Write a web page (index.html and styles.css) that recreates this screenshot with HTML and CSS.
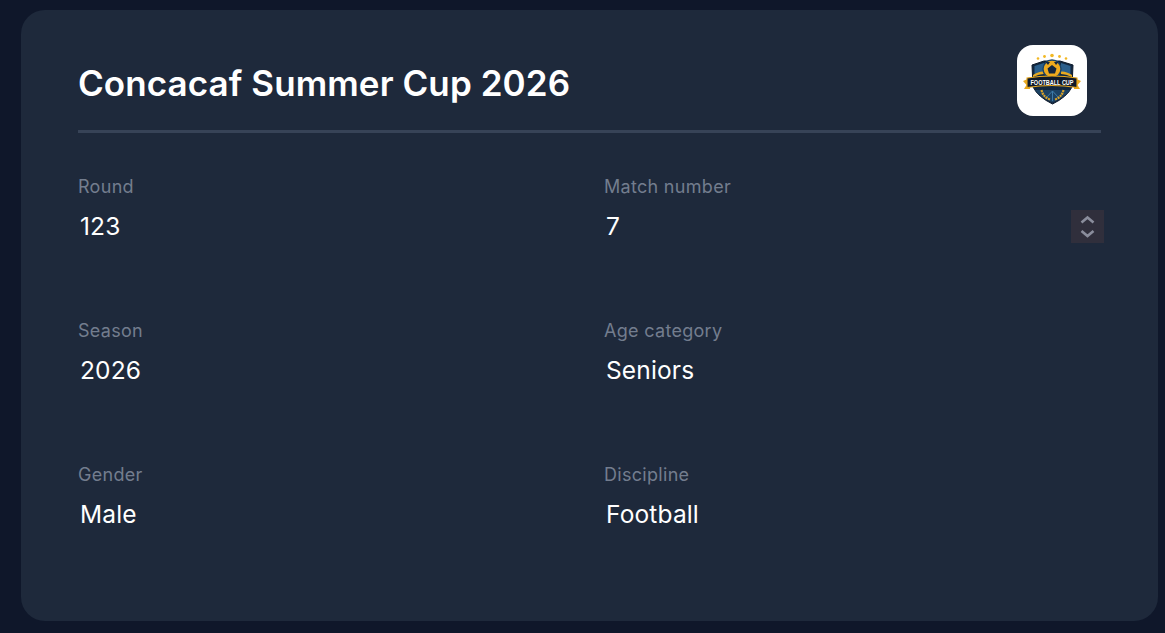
FILE: index.html
```html
<!DOCTYPE html>
<html lang="en">
<head>
<meta charset="utf-8">
<title>Concacaf Summer Cup 2026</title>
<link rel="stylesheet" href="styles.css">
</head>
<body>
<main class="card">
  <header class="header">
    <h1 class="title">Concacaf Summer Cup 2026</h1>
    <div class="logo">
      <svg viewBox="0 0 70 71" width="70" height="71" aria-hidden="true">
        <g fill="#f2b824">
          <circle cx="21" cy="13.500" r="1.300"/><circle cx="27.500" cy="11.500" r="1.400"/><circle cx="35" cy="10.500" r="1.800"/><circle cx="42.500" cy="11.500" r="1.400"/><circle cx="49" cy="13.500" r="1.300"/>
        </g>
        <path d="M15 20 L27 16 L43 16 L56 20 L55 42 Q50 52 35.500 59 Q21 52 16 42 Z" fill="#12273f" stroke="#0c1a2c" stroke-width="1"/>
        <path d="M17.500 21 L27 18 L27 28 L17.500 31 Z M53.500 21 L44 18 L44 28 L53.500 31 Z" fill="#2b5f8c"/>
        <path d="M16 30 Q22 26 27 26.500 L27 29 Q22 29 16 32 Z M55 30 Q49 26 44 26.500 L44 29 Q49 29 55 32 Z" fill="#e9a91f"/>
        <circle cx="35" cy="24" r="9" fill="#efaa1e" stroke="#1c4468" stroke-width="1.400"/>
        <path d="M35 20 L39.500 23.500 L38 28.500 L32 28.500 L30.500 23.500 Z M28.500 17 L33 17 L31 20 Z M37 17 L41.500 17 L39 20 Z" fill="#14263f"/>
        <path d="M18 45 L53 45 Q48 52 35.500 57.500 Q23 52 18 45 Z" fill="#1c4264"/>
        <path d="M35.500 46 L35.500 56 M35.500 46 L29 53 M35.500 46 L42 53" stroke="#3d7ba8" stroke-width="1"/>
        <path d="M6 36 L13 33 L13 44 L7 44 L9.500 40 Z M64 36 L57 33 L57 44 L63 44 L60.500 40 Z" fill="#e9a91f"/>
        <path d="M10 33 Q35 29 60 33 L60 42.500 Q35 38.500 10 42.500 Z" fill="#101a2a" stroke="#e9a91f" stroke-width="1.100"/>
        <text class="logo-text" x="13.500" y="40" textLength="43" lengthAdjust="spacingAndGlyphs">FOOTBALL CUP</text>
        <path d="M24.500 45 Q26 52 33 54.500 M46.500 45 Q45 52 38 54.500" fill="none" stroke="#d9a32a" stroke-width="2.200" stroke-dasharray="2 .8"/>
      </svg>
    </div>
  </header>
  <div class="fields">
    <div class="field">
      <div class="label">Round</div>
      <div class="value">123</div>
    </div>
    <div class="field">
      <div class="label">Match number</div>
      <div class="value">7</div>
      <div class="spinner">
        <svg viewBox="0 0 33 33" width="33" height="33" aria-hidden="true">
          <path d="M10.500 12.500 L16.500 7.500 L22.500 12.500 M10.500 21 L16.500 26 L22.500 21" fill="none" stroke="#8a8d9c" stroke-width="2.600"/>
        </svg>
      </div>
    </div>
    <div class="field">
      <div class="label">Season</div>
      <div class="value">2026</div>
    </div>
    <div class="field">
      <div class="label">Age category</div>
      <div class="value">Seniors</div>
    </div>
    <div class="field">
      <div class="label">Gender</div>
      <div class="value">Male</div>
    </div>
    <div class="field">
      <div class="label">Discipline</div>
      <div class="value">Football</div>
    </div>
  </div>
</main>
</body>
</html>
```
FILE: styles.css
```css
* { box-sizing: border-box; }
html, body { height: 100%; }
body {
  margin: 0;
  padding: 10px 7px 12px 21px;
  background: #0f172a;
  font-family: Inter, "Liberation Sans", sans-serif;
  overflow: hidden;
}
.card {
  height: 611px;
  padding: 35px 57px 0;
  background: #1e293b;
  border-radius: 24px;
}
.header {
  display: flex;
  align-items: flex-start;
  justify-content: space-between;
  height: 88px;
  padding-right: 14px;
  border-bottom: 3px solid #374357;
}
.title {
  margin: 0;
  padding-top: 17px;
  font-size: 35px;
  line-height: 42px;
  font-weight: 600;
  letter-spacing: 0.08px;
  color: #fff;
}
.logo {
  width: 70px;
  height: 71px;
  background: #fff;
  border-radius: 16px;
}
.logo svg { display: block; }
.logo-text {
  font-family: "Liberation Sans", sans-serif;
  font-size: 7px;
  font-weight: 700;
  fill: #fff;
}
.fields {
  display: grid;
  grid-template-columns: 526px 1fr;
  grid-auto-rows: 144px;
  padding-top: 41px;
}
.field { position: relative; }
.label {
  font-size: 18px;
  line-height: 26px;
  letter-spacing: 0.3px;
  color: #737d8e;
}
.value {
  margin-top: 10px;
  padding-left: 2px;
  font-size: 24.5px;
  line-height: 32px;
  letter-spacing: 0.15px;
  color: #fff;
}
.spinner {
  position: absolute;
  top: 36px;
  right: -3px;
  width: 33px;
  height: 33px;
  background: #302f3c;
}
.spinner svg { display: block; }
```
